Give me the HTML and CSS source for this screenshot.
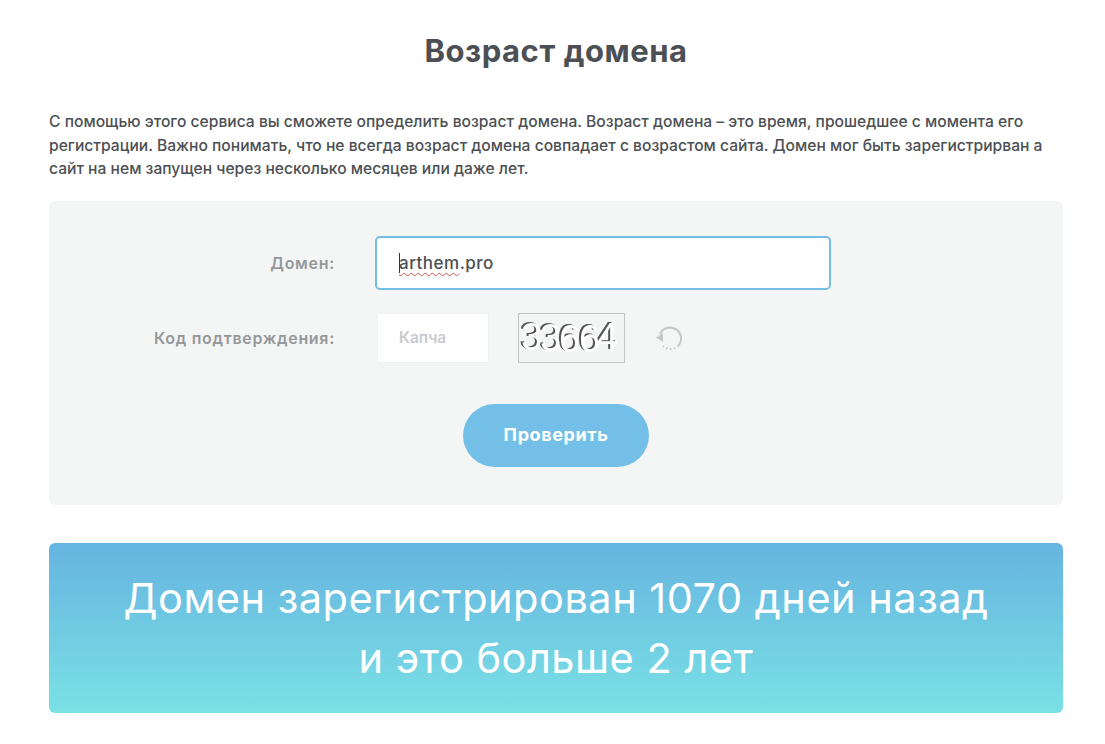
FILE: index.html
```html
<!DOCTYPE html>
<html lang="ru">
<head>
  <meta charset="UTF-8">
  <meta name="viewport" content="width=device-width, initial-scale=1.0">
  <title>Возраст домена</title>
  <link rel="stylesheet" href="styles.css">
</head>
<body>
  <div class="page">
    <h1 class="title">Возраст домена</h1>
    <p class="intro">С помощью этого сервиса вы сможете определить возраст домена. Возраст домена – это время, прошедшее с момента его<br>регистрации. Важно понимать, что не всегда возраст домена совпадает с возрастом сайта. Домен мог быть зарегистрирван а<br>сайт на нем запущен через несколько месяцев или даже лет.</p>

    <form class="panel">
      <div class="row row-domain">
        <label class="label">Домен:</label>
        <div class="domain-input"><span class="caret"></span><span class="typo">arthem</span>.pro</div>
      </div>
      <div class="row row-captcha">
        <label class="label">Код подтверждения:</label>
        <div class="captcha-input">Капча</div>
        <div class="captcha-img">
          <svg width="105" height="48" viewBox="0 0 105 48">
            <text class="captcha-digits" x="2 21 40 60 78" y="36 37 38 38 36">33664</text>
          </svg>
        </div>
        <svg class="refresh" width="28" height="28" viewBox="0 0 28 28">
          <path class="refresh-solid" d="M5 10A11 11 0 1 1 23.5 21.5"/>
          <path class="refresh-dots" d="M23.5 21.5A11 11 0 0 1 8 22"/>
          <path class="refresh-head" d="M1 13.5L8 9v9z"/>
        </svg>
      </div>
      <button class="submit" type="button">Проверить</button>
    </form>

    <div class="result">Домен зарегистрирован 1070 дней назад<br>и это больше 2 лет</div>
  </div>
</body>
</html>
```

FILE: styles.css
```css
body {
  margin: 0;
  background-color: #fff;
  color: #4c4f54;
  font-family: Inter, "Noto Sans", sans-serif;
}
.page {
  padding: 0 42px 31px 49px;
}
.title {
  margin: 0;
  padding-top: 33px;
  font-size: 31px;
  line-height: 36px;
  font-weight: 700;
  letter-spacing: 0.55px;
  text-align: center;
}
.intro {
  margin: 41px 0 0;
  font-size: 15.63px;
  line-height: 23.5px;
  font-weight: 500;
  white-space: nowrap;
}
.panel {
  box-sizing: border-box;
  height: 304px;
  margin-top: 20px;
  padding-top: 35px;
  background-color: #f4f6f6;
  border-radius: 6px;
}
.row {
  display: flex;
  align-items: center;
}
.label {
  width: 286px;
  font-size: 16px;
  font-weight: 600;
  letter-spacing: 0.7px;
  color: #95989a;
  text-align: right;
}
.domain-input {
  box-sizing: border-box;
  display: flex;
  align-items: center;
  width: 456px;
  height: 54px;
  margin-left: 40px;
  padding-left: 22px;
  background-color: #fff;
  border: 2px solid #74bde3;
  border-radius: 5px;
  font-size: 17px;
  font-weight: 500;
  letter-spacing: 0.5px;
}
.caret {
  width: 1px;
  height: 20px;
  margin-right: -1px;
  background-color: #333;
}
.typo {
  text-decoration: underline wavy #d9534f 1px;
  text-underline-offset: 3px;
}
.row-captcha {
  margin-top: 23px;
}
.captcha-input {
  box-sizing: border-box;
  width: 112px;
  height: 50px;
  margin-left: 42px;
  padding-left: 21px;
  background-color: #fff;
  border: 1px solid #f0f1f1;
  font-size: 15.5px;
  font-weight: 600;
  line-height: 48px;
  color: #c8cacd;
}
.captcha-img {
  box-sizing: border-box;
  width: 107px;
  height: 50px;
  margin-left: 29px;
  background-color: #f3f4f4;
  border: 1px solid #c4c6c6;
}
.captcha-img svg {
  display: block;
  filter: drop-shadow(-1.5px -0.5px 0 #555);
}
.captcha-digits {
  font-family: "Liberation Sans", sans-serif;
  font-size: 38px;
  fill: #fff;
}
.refresh {
  margin-left: 30px;
}
.refresh-solid,
.refresh-dots {
  fill: none;
  stroke: #c5c8c8;
  stroke-width: 2;
}
.refresh-dots {
  stroke-dasharray: 1.5 2.5;
}
.refresh-head {
  fill: #c5c8c8;
}
.submit {
  display: block;
  width: 186px;
  height: 63px;
  margin: 41px auto 0;
  padding-bottom: 3px;
  background-color: #74bfe8;
  border: 0;
  border-radius: 32px;
  color: #fff;
  font-family: inherit;
  font-size: 18px;
  font-weight: 700;
  letter-spacing: 0.6px;
}
.result {
  height: 170px;
  box-sizing: border-box;
  margin-top: 38px;
  padding-top: 25px;
  background: linear-gradient(#66b4e0, #7ae1e5);
  border-radius: 6px;
  color: #fff;
  font-size: 41.5px;
  line-height: 60px;
  font-weight: 400;
  letter-spacing: 0.5px;
  text-align: center;
}
```
